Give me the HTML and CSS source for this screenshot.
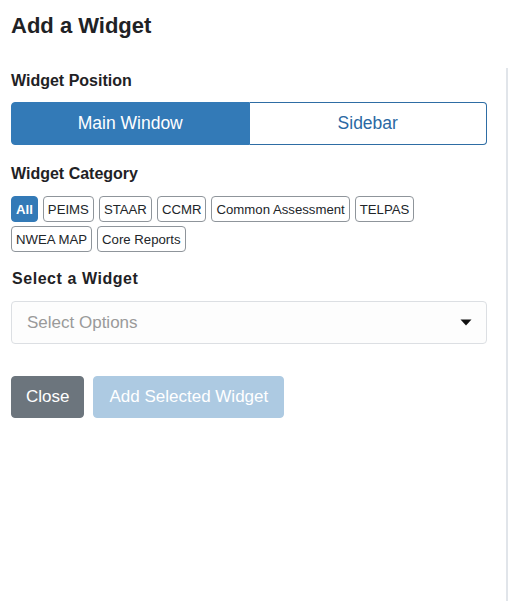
FILE: index.html
```html
<!DOCTYPE html>
<html lang="en">
<head>
<meta charset="utf-8">
<title>Add a Widget</title>
<link rel="stylesheet" href="styles.css">
</head>
<body>
<div class="page">
  <h1 class="title">Add a Widget</h1>
  <div class="panel">
    <div class="content">
      <h2 class="label label-position">Widget Position</h2>
      <div class="segmented">
        <button class="seg seg-active">Main Window</button>
        <button class="seg">Sidebar</button>
      </div>

      <h2 class="label label-category">Widget Category</h2>
      <div class="chips">
        <span class="chip chip-active">All</span>
        <span class="chip">PEIMS</span>
        <span class="chip">STAAR</span>
        <span class="chip">CCMR</span>
        <span class="chip">Common Assessment</span>
        <span class="chip">TELPAS</span>
        <span class="chip">NWEA MAP</span>
        <span class="chip">Core Reports</span>
      </div>

      <h2 class="label label-select">Select a Widget</h2>
      <div class="select">
        <span class="placeholder">Select Options</span>
        <svg class="caret" width="12" height="7" viewBox="0 0 12 7"><path d="M0.5 0.5 H11.5 L6 6.5 Z" fill="#111"/></svg>
      </div>

      <div class="actions">
        <button class="btn btn-close">Close</button>
        <button class="btn btn-add" disabled>Add Selected Widget</button>
      </div>
    </div>
  </div>
</div>
</body>
</html>
```

FILE: styles.css
```css
* { box-sizing: border-box; }

html, body {
  margin: 0;
  padding: 0;
  background: #ffffff;
}

body {
  font-family: "Liberation Sans", Arial, sans-serif;
  color: #212529;
}

.page {
  width: 524px;
  height: 608px;
  padding: 13px 0 7px 11px;
  display: flex;
  flex-direction: column;
}

.title {
  margin: 0;
  font-size: 22px;
  line-height: 25px;
  font-weight: bold;
  color: #1f2225;
}

.panel {
  margin-top: 30px;
  width: 497px;
  flex: 1;
  border-right: 2px solid #e1e5ea;
}

.content {
  width: 476px;
  padding-top: 4px;
}

.label {
  margin: 0;
  font-size: 16px;
  line-height: 18px;
  font-weight: bold;
  color: #1f2225;
}

.segmented {
  margin-top: 12px;
  display: flex;
  height: 43px;
}

.seg {
  flex: 1;
  margin: 0;
  font-family: "Liberation Sans", Arial, sans-serif;
  font-size: 17.5px;
  background: #ffffff;
  color: #2a68a3;
  border: 1px solid #2e6da4;
  border-left: none;
  border-radius: 0 4px 4px 0;
  padding: 0;
}

.seg-active {
  background: #337ab7;
  color: #ffffff;
  border: 1px solid #337ab7;
  border-radius: 4px 0 0 4px;
}

.label-category {
  margin-top: 20px;
}

.chips {
  margin-top: 13px;
  display: flex;
  flex-wrap: wrap;
  gap: 4px 5px;
  width: 420px;
}

.chip {
  display: inline-flex;
  align-items: center;
  height: 26px;
  padding: 0 4px;
  font-size: 13.2px;
  color: #212529;
  border: 1px solid #8f959b;
  border-radius: 4px;
  background: #fff;
}

.chip-active {
  background: #337ab7;
  border-color: #337ab7;
  color: #ffffff;
  font-weight: bold;
  padding: 0 4px 0 4px;
}

.label-select {
  margin-top: 18px;
  padding-left: 1px;
  letter-spacing: 0.55px;
}

.select {
  margin-top: 13px;
  height: 43px;
  display: flex;
  align-items: center;
  justify-content: space-between;
  padding: 0 14px 0 15px;
  border: 1px solid #dcdfe3;
  border-radius: 4px;
  background: #fdfdfd;
}

.placeholder {
  font-size: 17px;
  color: #9a9a9a;
}

.caret {
  display: block;
}

.actions {
  margin-top: 32px;
  display: flex;
  gap: 9px;
}

.btn {
  height: 42px;
  margin: 0;
  padding: 0 14px;
  font-family: "Liberation Sans", Arial, sans-serif;
  font-size: 17px;
  color: #ffffff;
  border: 1px solid transparent;
  border-radius: 4px;
}

.btn-close {
  background: #6c757d;
  border-color: #6c757d;
}

.btn-add {
  background: #adcae2;
  border-color: #adcae2;
  padding: 0 15px;
}
```
